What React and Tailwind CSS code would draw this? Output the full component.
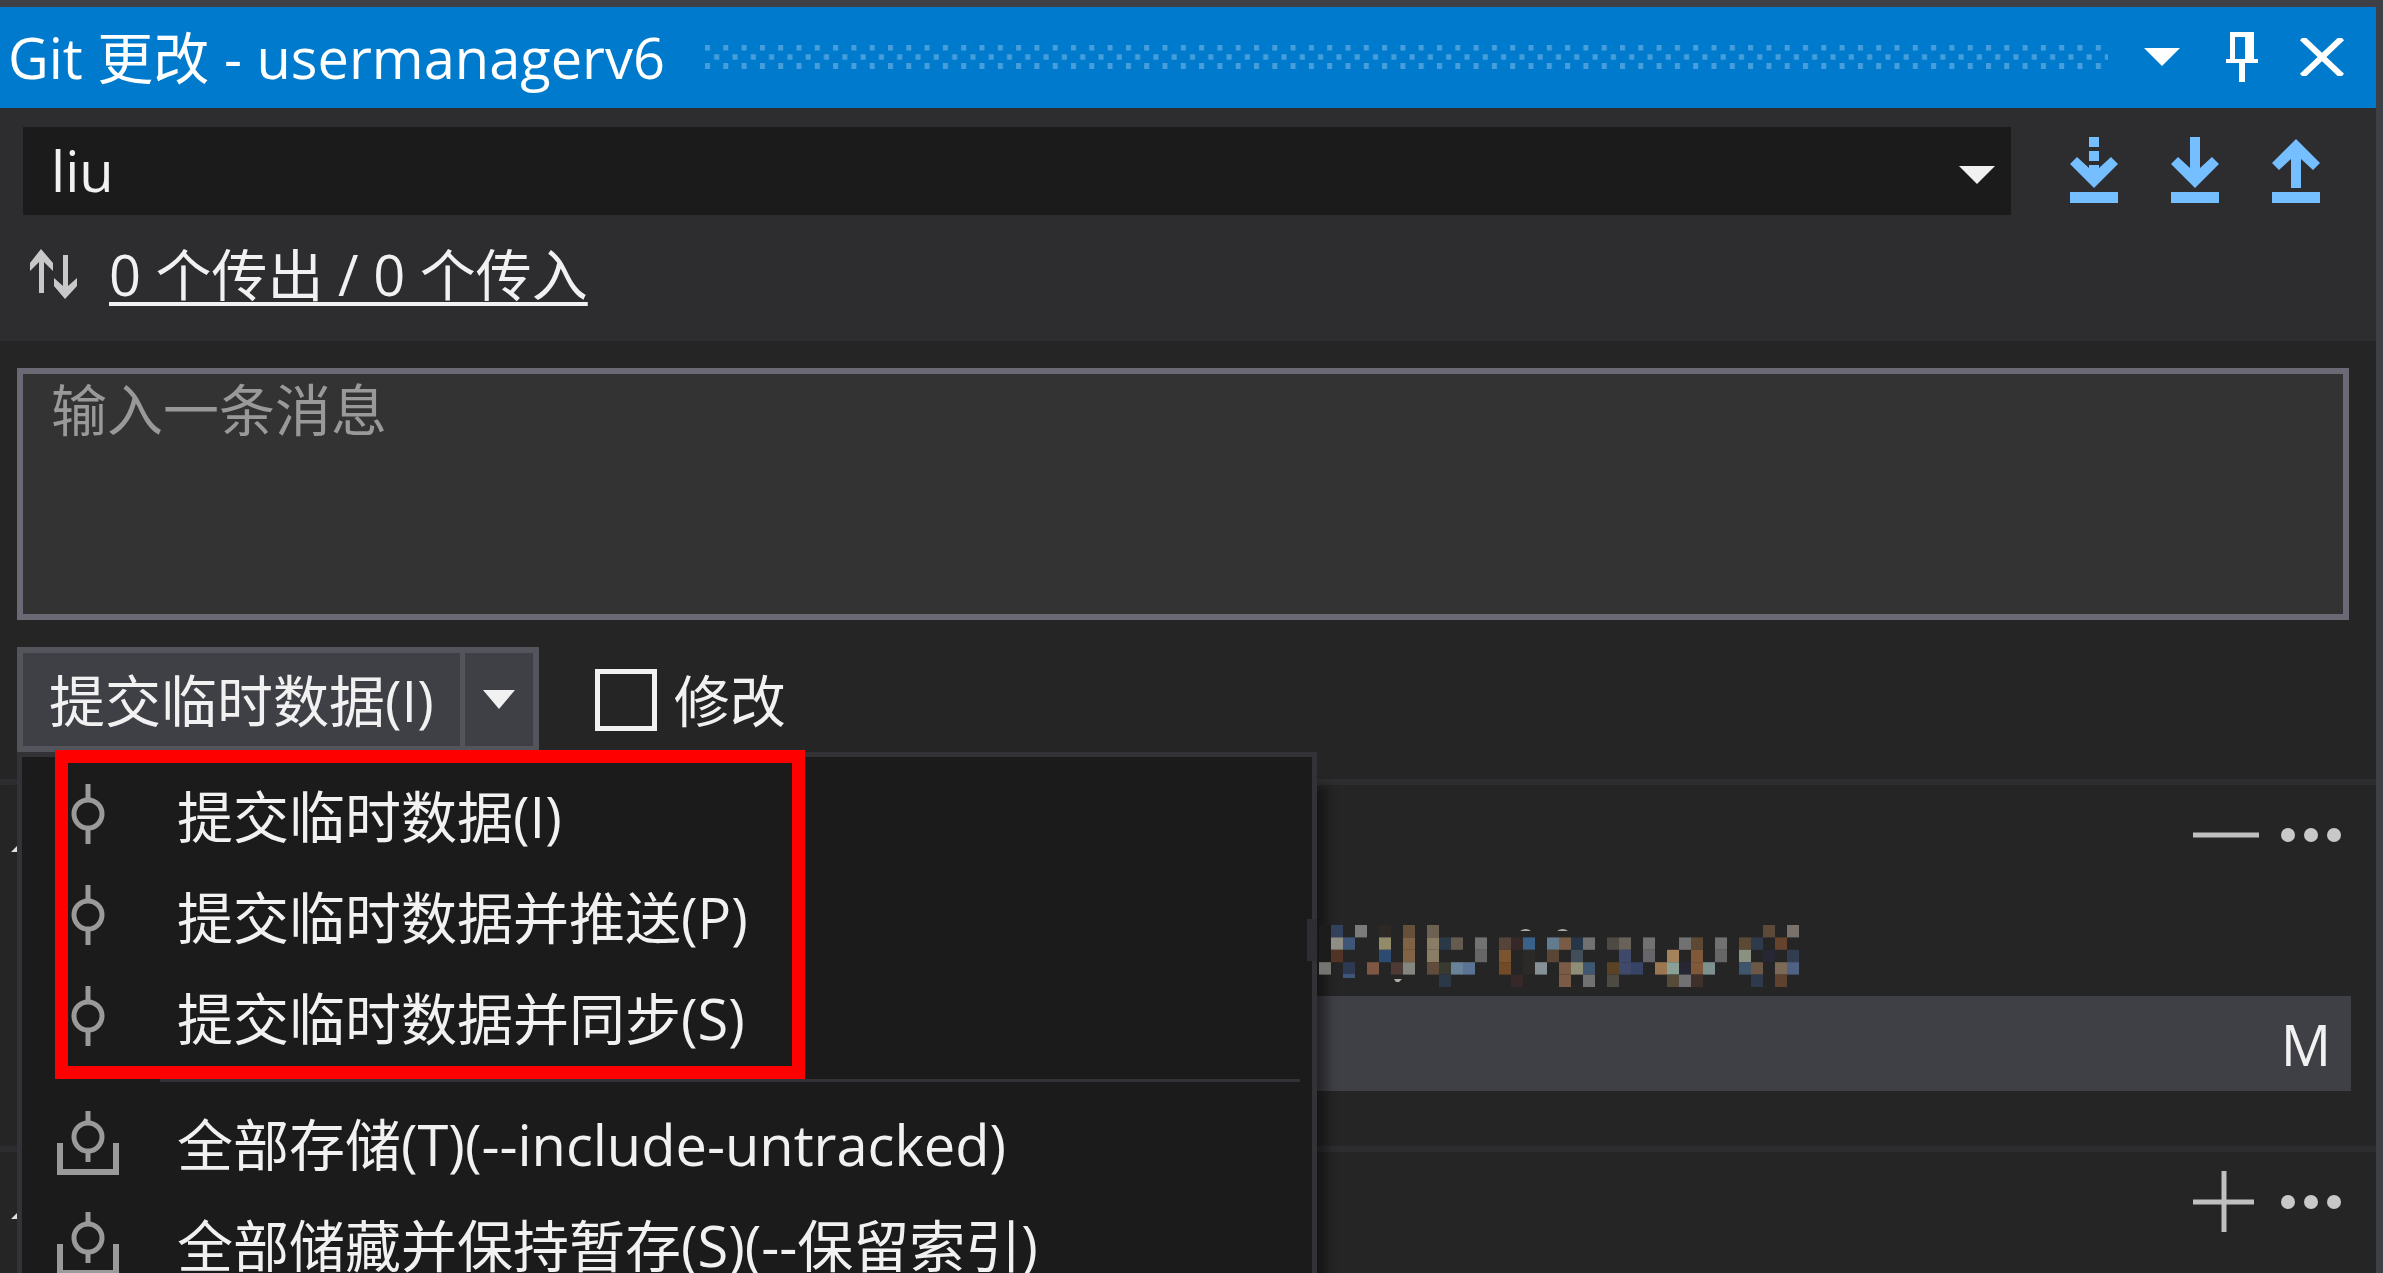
import { useState } from "react";

const MENU_MAIN = [
  "提交临时数据(I)",
  "提交临时数据并推送(P)",
  "提交临时数据并同步(S)",
];

const MENU_STASH = [
  "全部存储(T)(--include-untracked)",
  "全部储藏并保持暂存(S)(--保留索引)",
];

// [column, row, colour] of every block in the censored path
const MOSAIC = [
  [1, 0, "#1c1c1c"], [1, 1, "#1c1c1c"], [1, 2, "#1c1c1c"],
  [2, 0, "#33415c"], [4, 0, "#7b7b7b"], [6, 0, "#2e2926"], [8, 0, "#66503c"],
  [10, 0, "#6b6254"], [38, 0, "#5c4937"], [40, 0, "#79726c"],
  [2, 1, "#8f8e84"], [3, 1, "#3f5678"], [6, 1, "#928b6a"], [8, 1, "#806345"],
  [10, 1, "#8a7d66"], [11, 1, "#2b3947"], [12, 1, "#655b4f"], [14, 1, "#727272"],
  [16, 1, "#56443a"], [17, 1, "#362729"], [18, 1, "#3a6289"], [20, 1, "#627b8e"],
  [21, 1, "#7a5b45"], [22, 1, "#253648"], [23, 1, "#717171"], [25, 1, "#4d4943"],
  [26, 1, "#69625b"], [28, 1, "#717171"], [31, 1, "#717171"], [32, 1, "#5d4933"],
  [34, 1, "#717171"], [36, 1, "#5b4933"], [37, 1, "#2d3a4b"], [39, 1, "#65432d"],
  [2, 2, "#523427"], [6, 2, "#2d4b70"], [8, 2, "#806345"], [10, 2, "#8a7d66"],
  [14, 2, "#666666"], [16, 2, "#7a552f"], [18, 2, "#2b2a28"], [20, 2, "#5b4636"],
  [22, 2, "#424e59"], [26, 2, "#3f4969"], [28, 2, "#66666a"], [30, 2, "#a3825c"],
  [32, 2, "#80593a"], [34, 2, "#666666"], [36, 2, "#8b9180"], [38, 2, "#262732"],
  [40, 2, "#333d50"],
  [1, 3, "#747570"], [3, 3, "#2e3a52"], [5, 3, "#7d5743"], [7, 3, "#4e3a35"],
  [8, 3, "#838780"], [10, 3, "#604c3c"], [11, 3, "#38392f"], [12, 3, "#68829a"],
  [13, 3, "#5b7495"], [16, 3, "#714b27"], [18, 3, "#2b2a28"], [19, 3, "#859197"],
  [21, 3, "#7a5c46"], [22, 3, "#8f8e76"], [23, 3, "#3f5770"], [25, 3, "#5c4225"],
  [26, 3, "#3f4969"], [27, 3, "#364365"], [29, 3, "#9c7650"], [30, 3, "#8aa096"],
  [31, 3, "#262732"], [32, 3, "#80593a"], [33, 3, "#7d9190"], [36, 3, "#3f556b"],
  [37, 3, "#6c5844"], [39, 3, "#7d6a56"], [40, 3, "#506284"],
  [11, 4, "#2b3947"], [17, 4, "#362729"], [21, 4, "#7a5c46"], [23, 4, "#717171"],
  [25, 4, "#4d4943"], [30, 4, "#544b3b"], [31, 4, "#717171"], [32, 4, "#3f302c"],
  [37, 4, "#2d3a4b"], [39, 4, "#5e412e"],
];

const Caret = ({ className }) => (
  <svg viewBox="0 0 36 18" preserveAspectRatio="none" className={className}>
    <path d="M0 0h36L18 18z" fill="currentColor" />
  </svg>
);

const Grip = () => (
  <svg className="h-6 min-w-0 flex-1" aria-hidden="true">
    <defs>
      <pattern id="grip" width="18.3" height="24" patternUnits="userSpaceOnUse">
        <path d="M0 0h5v5.5H0zM9.2 9.2h5v5.5h-5zM0 18h5v6H0z" fill="#469fdc" />
      </pattern>
    </defs>
    <rect width="100%" height="24" fill="url(#grip)" />
  </svg>
);

const SyncIcon = ({ kind }) => (
  <svg viewBox="0 0 50 70" className="h-[70px] w-[50px]" fill="#75beff">
    <path d="M1 56h48v11H1z" />
    {kind === "push" ? (
      <path d="M25 3l24 24-7 7-12-11v29H20V23L8 34l-7-7z" />
    ) : (
      <path d="M25 52L1 28l7-7 12 11h10l12-11 7 7z" />
    )}
    {kind === "pull" && <path d="M20 1h10v33H20z" />}
    {kind === "fetch" && <path d="M20 1h10v10H20zM20 15h10v10H20zM20 29h10v8H20z" />}
  </svg>
);

const CommitIcon = () => (
  <svg viewBox="0 -3 64 72" className="h-[72px] w-16" fill="none" stroke="#9a9a9a" strokeWidth="5">
    <circle cx="32" cy="31" r="14" />
    <path d="M32 1v16M32 45v16" />
  </svg>
);

const StashIcon = () => (
  <svg viewBox="0 -3 64 72" className="h-[72px] w-16" fill="none" stroke="#9a9a9a" strokeWidth="5">
    <circle cx="32" cy="26" r="14" />
    <path d="M32 0v12M32 40v11" />
    <path d="M4 32v29h56V32" strokeWidth="6" />
  </svg>
);

const DotsIcon = () => (
  <svg viewBox="0 0 62 16" className="h-4 w-[62px]" fill="#c8c8c8">
    <circle cx="8" cy="8" r="7" />
    <circle cx="31" cy="8" r="7" />
    <circle cx="54" cy="8" r="7" />
  </svg>
);

const MenuItem = ({ icon, children }) => (
  <button className="flex h-[101px] w-full items-center gap-[57px] pb-1.5 pl-[34px] text-left whitespace-nowrap">
    {icon}
    {children}
  </button>
);

const SectionHeader = ({ action, path }) => (
  <div className="flex h-[100px] items-center justify-between border-t-[6px] border-[#2d2d30] box-content pr-[34px] pl-[11px]">
    <button aria-label="折叠">
      <svg viewBox="0 0 34 34" className="size-[34px]">
        <path d="M0 34L34 0v34z" fill="#e0e0e0" />
      </svg>
    </button>
    <div className="flex items-center gap-5">
      <button aria-label={action}>
        <svg viewBox="0 0 68 68" className="size-[68px]" stroke="#c0c0c0" strokeWidth="5">
          <path d={path} />
        </svg>
      </button>
      <button aria-label="更多">
        <DotsIcon />
      </button>
    </div>
  </div>
);

const App = () => {
  const [message, setMessage] = useState("");
  const [amend, setAmend] = useState(false);

  return (
    <main className="h-screen overflow-hidden border-t-[7px] border-r-[7px] border-[#3f3f46] bg-[#252526] font-['Open_Sans','Noto_Sans_CJK_SC',sans-serif] text-[56px] leading-[70px] text-[#f1f1f1]">
      {/* Title bar */}
      <header className="flex h-[101px] items-center bg-[#007acc] pr-[30px] pb-0.5 pl-2 text-white">
        <h1 className="mr-10 whitespace-nowrap">Git 更改 - usermanagerv6</h1>
        <Grip />
        <button aria-label="窗口位置" className="ml-9">
          <Caret className="h-[18px] w-9" />
        </button>
        <button aria-label="自动隐藏" className="ml-[46px]">
          <svg viewBox="0 0 32 50" className="h-[50px] w-8" fill="currentColor">
            <path d="M4 0h24v27h4v4H19v19h-6V31H0v-4h4zM9 5v22h10V5z" fillRule="evenodd" />
          </svg>
        </button>
        <button aria-label="关闭" className="ml-10">
          <svg viewBox="0 0 48 38" className="h-[38px] w-12" stroke="currentColor" strokeWidth="6">
            <path d="M4 0l40 38M44 0L4 38" />
          </svg>
        </button>
      </header>

      {/* Branch and sync toolbar */}
      <section className="bg-[#2d2d30] pt-[19px] pb-8">
        <div className="flex items-center pr-[55px] pl-[23px]">
          <div className="relative flex-1">
            <select
              aria-label="分支"
              className="block h-[88px] w-full appearance-none bg-[#1b1b1c] pb-0.5 pl-7 outline-none"
            >
              <option>liu</option>
            </select>
            <Caret className="pointer-events-none absolute top-[39px] right-4 h-[18px] w-9" />
          </div>
          <div className="ml-[58px] flex gap-[51px]">
            <button aria-label="提取">
              <SyncIcon kind="fetch" />
            </button>
            <button aria-label="拉取">
              <SyncIcon kind="pull" />
            </button>
            <button aria-label="推送">
              <SyncIcon kind="push" />
            </button>
          </div>
        </div>
        <div className="mt-6 flex items-center gap-[31px] pl-[29px]">
          <svg viewBox="0 0 49 52" className="h-[52px] w-[49px]" fill="#c8c8c8">
            <path d="M12 1l12 14v8l-9-9v31h-5V14l-9 9v-8z" />
            <path d="M36 51l12-13v-8l-9 8V7h-5v31l-9-8v8z" />
          </svg>
          <a href="#commits" className="underline decoration-4 underline-offset-[6px] [text-decoration-skip-ink:none]">
            0 个传出 / 0 个传入
          </a>
        </div>
      </section>

      {/* Commit form */}
      <section className="pt-[27px] pl-[17px]">
        <div className="pr-[27px]">
          <textarea
            aria-label="提交消息"
            placeholder="输入一条消息"
            value={message}
            onChange={(e) => setMessage(e.target.value)}
            className="block h-[252px] w-full resize-none border-[6px] border-[#6a6974] bg-[#333333] pl-7 outline-none placeholder:text-[#999999]"
          />
        </div>
        <div className="relative mt-[27px] flex items-center">
          <div className="flex h-[105px] border-[6px] border-[#54545c] bg-[#3f3f46]">
            <button className="border-r-[5px] border-[#54545c] px-[26px] whitespace-nowrap">
              提交临时数据(I)
            </button>
            <button aria-label="更多提交选项" className="px-[18px]">
              <Caret className="h-[19px] w-8" />
            </button>
          </div>
          <label className="ml-14 flex items-center gap-[17px]">
            <input
              type="checkbox"
              checked={amend}
              onChange={(e) => setAmend(e.target.checked)}
              className="size-[62px] appearance-none border-[5px] border-[#f1f1f1] checked:bg-[#007acc]"
            />
            修改
          </label>

          {/* Commit drop-down */}
          <div className="absolute top-full left-0 z-10 w-[1300px] border-[5px] border-[#333337] bg-[#1b1b1c] pt-[11px] shadow-[10px_34px_10px_rgba(0,0,0,0.4)]">
            <div className="relative">
              {MENU_MAIN.map((text) => (
                <MenuItem key={text} icon={<CommitIcon />}>
                  {text}
                </MenuItem>
              ))}
              <div className="pointer-events-none absolute -top-[18px] -bottom-2 left-[33px] w-[750px] border-[13px] border-[#ff0000]" />
            </div>
            <hr className="mt-2 mr-3 mb-[14px] ml-[138px] border-t-[3px] border-[#333337]" />
            {MENU_STASH.map((text) => (
              <MenuItem key={text} icon={<StashIcon />}>
                {text}
              </MenuItem>
            ))}
          </div>
        </div>
      </section>

      {/* Changed files */}
      <section className="mt-[27px]">
        <SectionHeader action="全部取消暂存" path="M1 34h66" />
        <div className="mt-4 flex h-[95px] items-end pb-[9px] pl-[1307px]">
          <svg viewBox="0 0 494 68" className="relative z-20 h-[68px] w-[494px]">
            <path d="M0 0h10v42H0z" fill="#2d2d32" />
            {MOSAIC.map(([col, row, color]) => (
              <rect key={`${col}-${row}`} x={col * 12} y={6 + row * 12.4} width="12" height="12.4" fill={color} />
            ))}
            <path d="M36 55h12v4H36z" fill="#3f5678" />
            <path d="M213 12q6-4 11 0zM250 12q6-4 11 0zM87 60h8l-3 3h-3z" fill="#b0aca4" />
          </svg>
        </div>
        <div className="mr-[25px] ml-[17px] flex h-[95px] items-center justify-end bg-[#3f3f46] pr-5">M</div>
      </section>
      <section className="mt-[55px]">
        <SectionHeader action="全部暂存" path="M1 34h61M32 3v61" />
      </section>
    </main>
  );
};

export default App;
